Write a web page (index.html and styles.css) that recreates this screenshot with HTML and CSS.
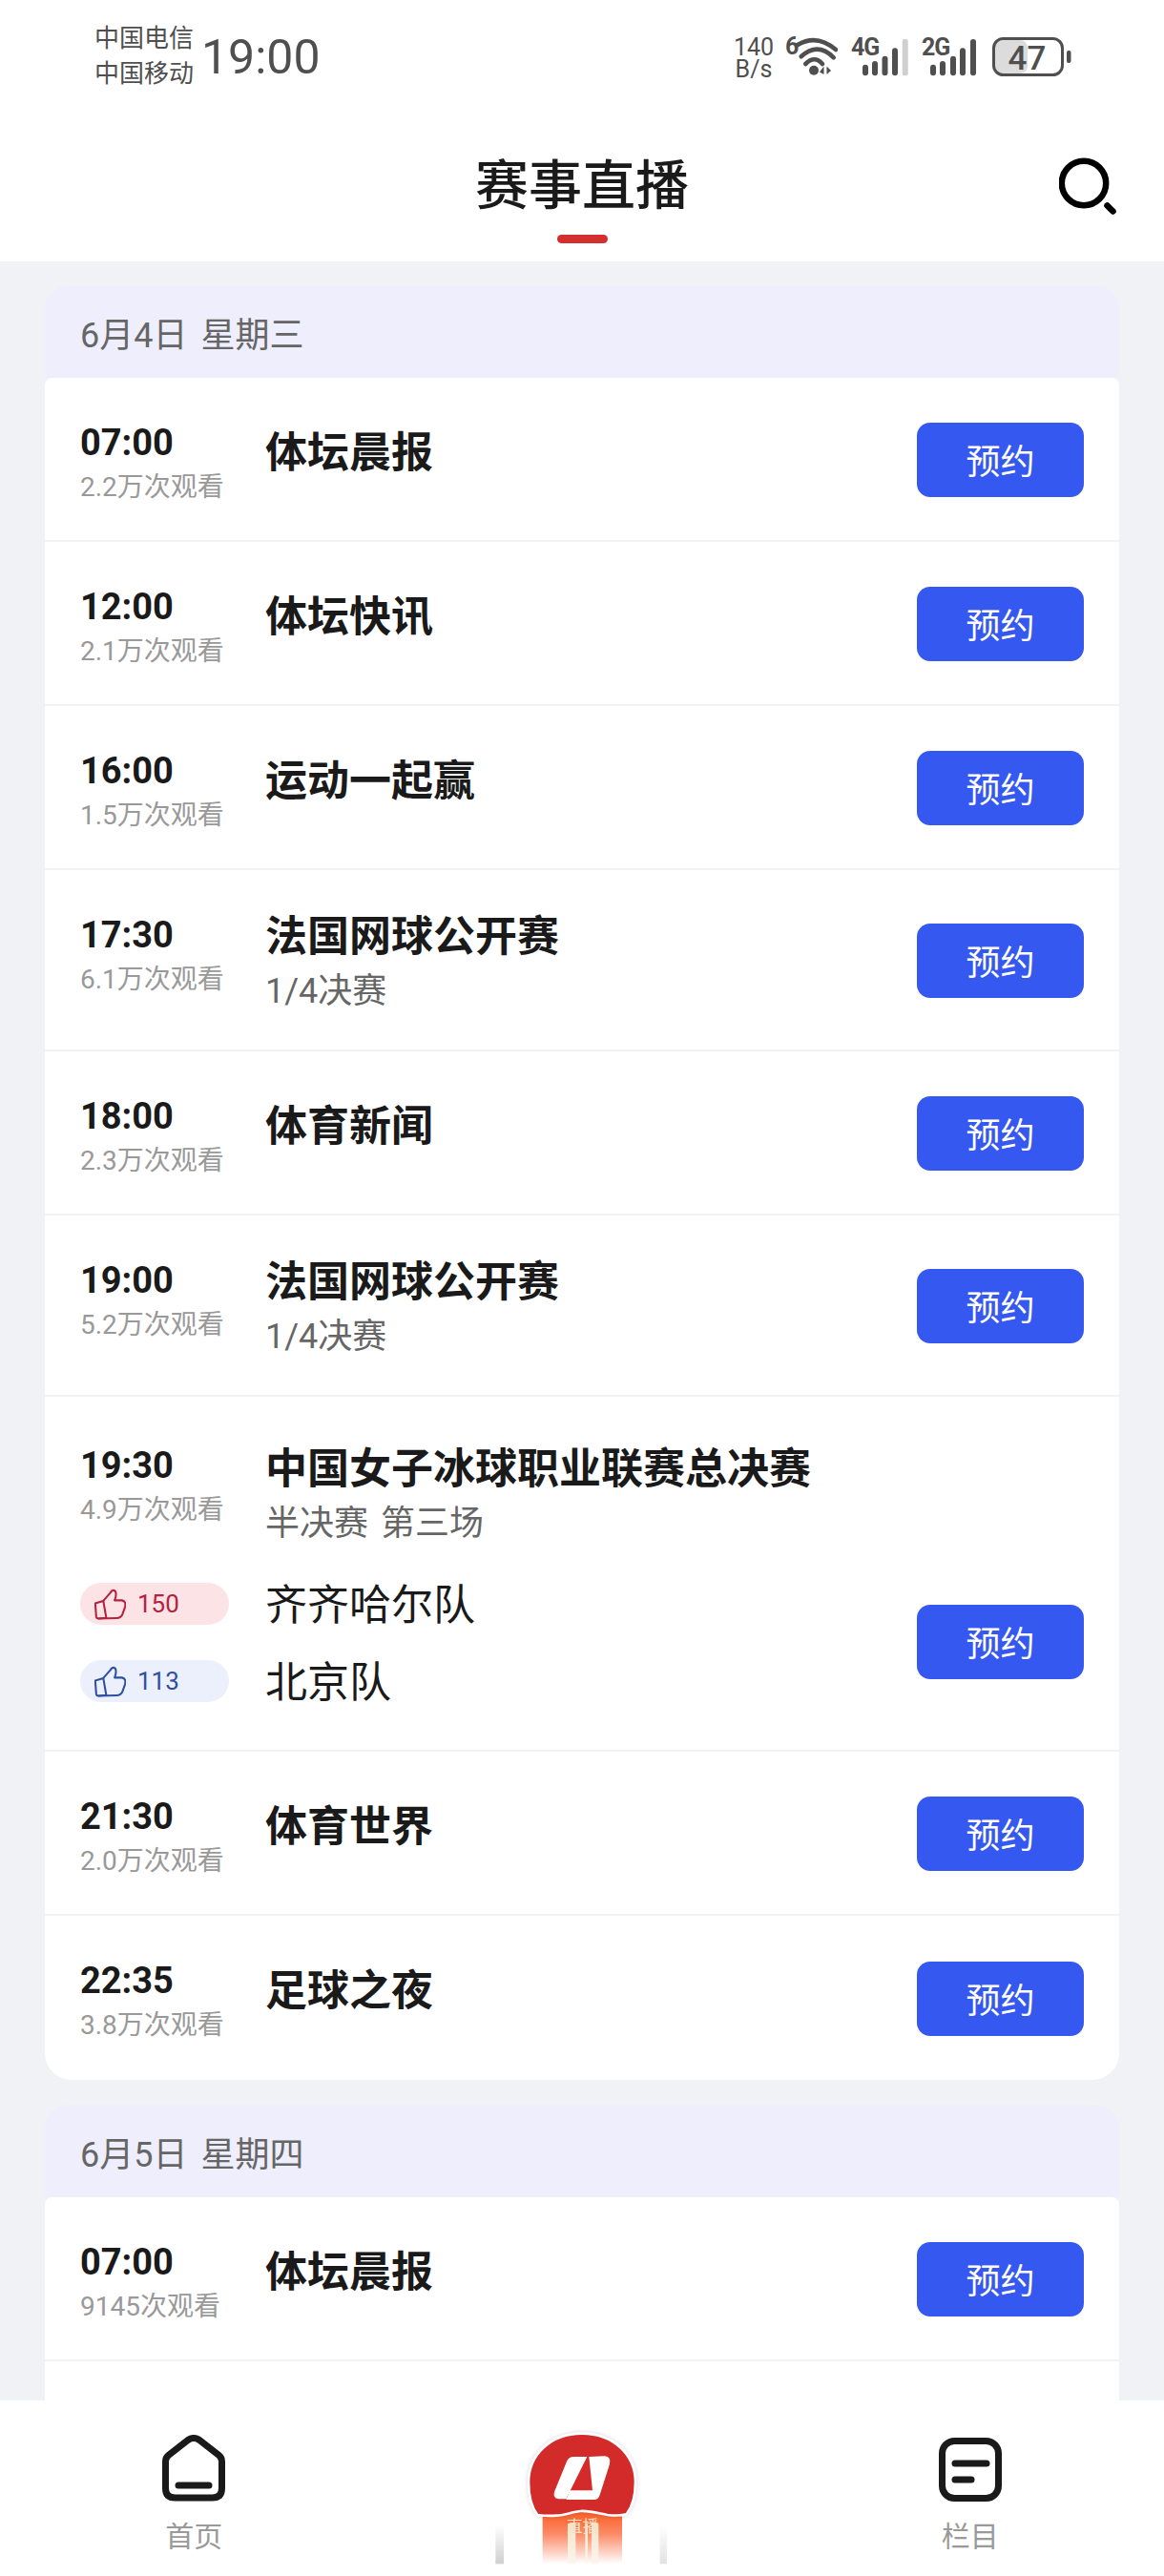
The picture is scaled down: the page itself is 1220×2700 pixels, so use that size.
FILE: index.html
```html
<!DOCTYPE html>
<html lang="zh-CN">
<head>
<meta charset="utf-8">
<title>赛事直播</title>
<link rel="stylesheet" href="styles.css">
</head>
<body>
<div class="app">
  <header class="top">
    <div class="status">
      <div class="carrier"><span>中国电信</span><span>中国移动</span></div>
      <div class="clock">19:00</div>
      <div class="status-right">
        <div class="speed"><span>140</span><span>B/s</span></div>
        <svg class="ico-wifi" width="55" height="50" viewBox="0 -6 55 50">
          <text class="st-num" x="0" y="20">6</text>
          <g class="st-line"><path d="M13 10 Q33 -2 53 15"/><path d="M16.7 22.3 Q34 6.6 50.7 23.3"/><path d="M21.3 30 Q30.7 20.6 39 30"/></g>
          <circle class="st-fill" cx="30" cy="36.7" r="5"/>
          <polygon class="st-fill" points="40.5,32.5 40.5,41 36,38.5"/>
          <polygon class="st-fill" points="43.5,32.5 43.5,41 48,37"/>
        </svg>
        <svg width="60" height="50" viewBox="0 -6 60 50">
          <text class="st-num" x="0" y="21">4G</text>
          <g class="st-fill"><rect x="12" y="30.7" width="6" height="11.6" rx="3"/><rect x="22" y="27" width="6" height="15.3" rx="3"/><rect x="32.5" y="21.7" width="6" height="20.6" rx="3"/><rect x="43" y="13.3" width="6" height="29" rx="3"/></g>
          <rect class="st-off" x="53.7" y="4" width="6" height="38.3" rx="2"/>
        </svg>
        <svg width="60" height="50" viewBox="0 -6 60 50">
          <text class="st-num" x="0" y="21">2G</text>
          <g class="st-fill"><rect x="9" y="30.7" width="6" height="11.6" rx="3"/><rect x="19" y="27" width="6" height="15.3" rx="3"/><rect x="30" y="21.7" width="6" height="20.6" rx="3"/><rect x="40" y="13.3" width="6" height="29" rx="3"/><rect x="51" y="4" width="6" height="38.3" rx="3"/></g>
        </svg>
        <svg width="83" height="44" viewBox="0 0 83 44">
          <rect class="st-off2" x="3" y="5" width="34" height="35" rx="8"/>
          <rect class="bat-frame" x="1.5" y="3.5" width="72" height="38" rx="10"/>
          <text class="bat-num" x="36.5" y="36">47</text>
          <rect class="st-fill" x="78" y="16" width="4.5" height="13" rx="2"/>
        </svg>
      </div>
    </div>
    <nav class="nav">
      <div></div>
      <div class="nav-mid">
        <h1 class="nav-title">赛事直播</h1>
        <div class="nav-mark"></div>
      </div>
      <svg class="search" width="60" height="60" viewBox="0 0 60 60">
        <circle cx="26" cy="27" r="23.2"/>
        <line x1="50.5" y1="50.5" x2="56.5" y2="56.5"/>
      </svg>
    </nav>
  </header>

  <main class="list">
    <section class="day">
      <h2 class="day-head">6月4日 星期三</h2>
      <div class="rows">
        <article class="row">
          <div class="when"><div class="time">07:00</div><div class="views">2.2万次观看</div></div>
          <div class="info"><div class="title">体坛晨报</div></div>
          <button class="book">预约</button>
        </article>
        <article class="row">
          <div class="when"><div class="time">12:00</div><div class="views">2.1万次观看</div></div>
          <div class="info"><div class="title">体坛快讯</div></div>
          <button class="book">预约</button>
        </article>
        <article class="row">
          <div class="when"><div class="time">16:00</div><div class="views">1.5万次观看</div></div>
          <div class="info"><div class="title">运动一起赢</div></div>
          <button class="book">预约</button>
        </article>
        <article class="row row-sub">
          <div class="when"><div class="time">17:30</div><div class="views">6.1万次观看</div></div>
          <div class="info"><div class="title">法国网球公开赛</div><div class="sub">1/4决赛</div></div>
          <button class="book">预约</button>
        </article>
        <article class="row">
          <div class="when"><div class="time">18:00</div><div class="views">2.3万次观看</div></div>
          <div class="info"><div class="title">体育新闻</div></div>
          <button class="book">预约</button>
        </article>
        <article class="row row-sub">
          <div class="when"><div class="time">19:00</div><div class="views">5.2万次观看</div></div>
          <div class="info"><div class="title">法国网球公开赛</div><div class="sub">1/4决赛</div></div>
          <button class="book">预约</button>
        </article>
        <article class="row row-match">
          <div class="when"><div class="time">19:30</div><div class="views">4.9万次观看</div></div>
          <div class="info"><div class="title">中国女子冰球职业联赛总决赛</div><div class="sub">半决赛 第三场</div></div>
          <div class="teams">
            <div class="team">
              <div class="pill pill-red">
                <svg class="thumb" width="33" height="33" viewBox="0 0 32 32"><path d="M0.8 15 L9 12.5 L12 29.8 L4 30.5 Q2 30.5 1.8 28.5 Z"/><path d="M9 12.5 L16 4.5 Q18.5 0.5 21 2.5 Q23 5.5 20.5 12 L28 12 Q32.5 13 31 19 L28.5 26 Q27 30 22.5 30 L4 30.5"/></svg>
                <span>150</span>
              </div>
              <div class="team-name">齐齐哈尔队</div>
            </div>
            <div class="team">
              <div class="pill pill-blue">
                <svg class="thumb" width="33" height="33" viewBox="0 0 32 32"><path d="M0.8 15 L9 12.5 L12 29.8 L4 30.5 Q2 30.5 1.8 28.5 Z"/><path d="M9 12.5 L16 4.5 Q18.5 0.5 21 2.5 Q23 5.5 20.5 12 L28 12 Q32.5 13 31 19 L28.5 26 Q27 30 22.5 30 L4 30.5"/></svg>
                <span>113</span>
              </div>
              <div class="team-name">北京队</div>
            </div>
          </div>
          <button class="book">预约</button>
        </article>
        <article class="row">
          <div class="when"><div class="time">21:30</div><div class="views">2.0万次观看</div></div>
          <div class="info"><div class="title">体育世界</div></div>
          <button class="book">预约</button>
        </article>
        <article class="row row-last">
          <div class="when"><div class="time">22:35</div><div class="views">3.8万次观看</div></div>
          <div class="info"><div class="title">足球之夜</div></div>
          <button class="book">预约</button>
        </article>
      </div>
    </section>

    <section class="day">
      <h2 class="day-head">6月5日 星期四</h2>
      <div class="rows">
        <article class="row">
          <div class="when"><div class="time">07:00</div><div class="views">9145次观看</div></div>
          <div class="info"><div class="title">体坛晨报</div></div>
          <button class="book">预约</button>
        </article>
        <div class="row-filler"></div>
      </div>
    </section>
  </main>

  <footer class="tabs">
    <a class="tab">
      <svg class="tab-ico" width="66" height="70" viewBox="0 0 66 70">
        <path d="M3.5 28 Q3.5 24 6.5 21.5 L27 5.5 Q33 1.5 39 5.5 L59.5 21.5 Q62.5 24 62.5 28 L62.5 56 Q62.5 66 52.5 66 L13.5 66 Q3.5 66 3.5 56 Z" />
        <line x1="17" y1="53" x2="49" y2="53"/>
      </svg>
      <span class="tab-label">首页</span>
    </a>
    <div class="tab tab-live">
      <svg class="live" width="200" height="172" viewBox="0 0 600 516">
        <defs>
          <linearGradient id="flame" x1="0" y1="0" x2="0" y2="1"><stop offset="0" stop-color="#fb5a1e"/><stop offset="0.45" stop-color="#fb8a66"/><stop offset="1" stop-color="#fff"/></linearGradient>
          <linearGradient id="smear" x1="0" y1="0" x2="0" y2="1"><stop offset="0" stop-color="#fff"/><stop offset="1" stop-color="#cfcfcf"/></linearGradient>
          <linearGradient id="cream" x1="0" y1="0" x2="0" y2="1"><stop offset="0" stop-color="#f6e3c8"/><stop offset="1" stop-color="#fbf6ee"/></linearGradient>
        </defs>
        <rect x="28" y="350" width="26" height="122" fill="url(#smear)"/>
        <rect x="545" y="350" width="22" height="122" fill="url(#smear)" opacity=".6"/>
        <rect x="176" y="300" width="250" height="172" fill="url(#flame)"/>
        <rect x="255" y="345" width="25" height="127" fill="url(#cream)"/>
        <rect x="310" y="345" width="8" height="127" fill="url(#cream)"/>
        <rect x="330" y="345" width="22" height="127" fill="url(#cream)"/>
        <text class="live-text" x="252" y="372">直播</text>
        <path class="live-blob" d="M300 62 C400 62 468 130 468 215 C468 260 456 295 440 316 Q420 322 380 318 C340 310 320 304 296 306 C270 308 250 318 220 320 Q190 322 160 318 C142 295 132 260 132 215 C132 130 200 62 300 62 Z"/>
        <path class="live-mark" d="M252 150 Q258 135 274 135 L316 135 L250 268 L226 268 Q208 265 213 245 Z"/>
        <path class="live-mark" d="M322 135 L372 133 Q392 135 387 158 L356 255 Q352 270 338 270 L250 270 L262 241 L333 241 Z"/>
      </svg>
    </div>
    <a class="tab">
      <svg class="tab-ico" width="66" height="70" viewBox="0 0 66 70">
        <rect x="3.5" y="6.5" width="59" height="60" rx="13"/>
        <line x1="17" y1="30" x2="50" y2="30"/>
        <line x1="17" y1="47" x2="34" y2="47"/>
      </svg>
      <span class="tab-label">栏目</span>
    </a>
  </footer>
</div>
</body>
</html>
```
FILE: styles.css
```css
* { box-sizing: border-box; }
html, body { margin: 0; padding: 0; }
body {
  width: 1220px;
  height: 2700px;
  overflow: hidden;
  background: #f1f2f5;
  font-family: Roboto, "Noto Sans CJK SC", sans-serif;
  color: #1a1a1a;
}
.app { display: flex; flex-direction: column; height: 2700px; }

/* header */
.top { background: #fff; flex: none; }
.status {
  height: 118px;
  display: flex;
  align-items: center;
  padding: 0 97px 0 99px;
  color: #4f4f4f;
}
.carrier { flex: none; display: flex; flex-direction: column; font-size: 26px; line-height: 37px; width: 106px; white-space: nowrap; }
.carrier span { height: 37px; }
.clock { flex: none; font-size: 50px; line-height: 60px; margin: 2px 0 0 6px; }
.status-right { margin-left: auto; display: flex; align-items: flex-end; gap: 14px; height: 44px; }
.speed { display: flex; flex-direction: column; align-items: center; font-size: 25px; line-height: 23px; width: 44px; margin-bottom: -3px; margin-left: 3px; margin-right: -3px; }
.st-num { font: 700 25px Roboto, sans-serif; fill: #4f4f4f; letter-spacing: -1px; }
.st-fill { fill: #4f4f4f; }
.st-off { fill: #cfcfcf; }
.st-off2 { fill: #dcdcdc; }
.st-line path { fill: none; stroke: #4f4f4f; stroke-width: 4.6; stroke-linecap: round; }
.bat-frame { fill: none; stroke: #4f4f4f; stroke-width: 3; }
.bat-num { font: 500 35px Roboto, sans-serif; fill: #4f4f4f; text-anchor: middle; }

.nav {
  height: 156px;
  display: grid;
  grid-template-columns: 1fr auto 1fr;
  padding-top: 41px;
}
.nav-mid { display: flex; flex-direction: column; align-items: center; }
.nav-title { margin: 0; height: 72px; font-size: 56px; line-height: 72px; font-weight: 500; color: #1a1a1a; }
.nav-mark { width: 53px; height: 9px; border-radius: 5px; background: #d32f2f; margin-top: 15px; }
.search { justify-self: end; margin: 6px 50px 0 0; fill: none; stroke: #000; stroke-width: 6.5; stroke-linecap: round; }

/* list */
.list { flex: 1; min-height: 0; overflow: hidden; padding: 26px 47px 0; display: flex; flex-direction: column; gap: 27px; }
.day-head {
  margin: 0;
  height: 96px;
  padding: 0 37px;
  display: flex;
  align-items: center;
  font-size: 36px;
  font-weight: 400;
  word-spacing: 5px;
  color: #666;
  background: #eeeefc;
  border-radius: 24px 24px 0 0;
}
.rows { background: #fff; border-radius: 8px 8px 28px 28px; overflow: hidden; }
.row {
  display: grid;
  grid-template-columns: 194px 1fr 175px;
  align-items: start;
  padding: 40px 37px 38px;
  border-bottom: 2px solid #f1f2f5;
  min-height: 172px;
}
.row-last { border-bottom: 0; }
.when { margin-top: 5px; }
.time { height: 46px; font-size: 38px; line-height: 46px; font-weight: 700; color: #1a1a1a; }
.views { height: 37px; font-size: 28px; line-height: 40px; margin-top: 4px; color: #999; }
.info { margin-top: 9px; }
.title { height: 60px; font-size: 44px; line-height: 60px; font-weight: 700; color: #1a1a1a; }
.sub { height: 46px; font-size: 36px; line-height: 46px; margin-top: 4px; color: #666; word-spacing: 4px; }
.book {
  align-self: center;
  width: 175px;
  height: 78px;
  border: 0;
  padding: 0 0 3px;
  border-radius: 14px;
  background: #3558f0;
  color: #fff;
  font-family: inherit;
  font-size: 36px;
}
.row-sub .info { margin-top: 0; }
.row-match { padding-top: 46px; padding-bottom: 50px; }
.row-match .when { margin-top: 3px; }
.row-match .info { margin-top: 0; }
.teams { grid-column: 1 / 3; margin-top: 39px; display: flex; flex-direction: column; gap: 37px; }
.team { display: grid; grid-template-columns: 194px 1fr; grid-template-rows: 44px; align-items: center; height: 44px; }
.pill {
  width: 156px;
  height: 44px;
  border-radius: 22px;
  display: flex;
  align-items: center;
  gap: 12px;
  padding-left: 15px;
  font-size: 26px;
}
.pill-red { background: #fbe3e6; color: #b5213f; }
.pill-blue { background: #ebf0fc; color: #2f4f9f; }
.thumb { fill: none; stroke: currentColor; stroke-width: 2; stroke-linejoin: round; }
.team-name { height: 60px; margin-top: 4px; font-size: 44px; line-height: 60px; color: #1a1a1a; }
.row-match .book { align-self: end; margin-bottom: 24px; }
.row-filler { height: 172px; }

/* tabs */
.tabs {
  flex: none;
  height: 184px;
  background: #fff;
  display: grid;
  grid-template-columns: repeat(3, 1fr);
}
.tab { display: flex; flex-direction: column; align-items: center; }
.tab-ico { margin-top: 36px; fill: none; stroke: #1a1a1a; stroke-width: 7; stroke-linecap: round; stroke-linejoin: round; }
.tab-label { height: 36px; margin-top: 19px; font-size: 30px; line-height: 36px; color: #999; }
.live { margin-top: 14px; }
.live-blob { fill: #d32a2a; stroke: #fff; stroke-width: 8; filter: drop-shadow(0 0 7px rgba(0,0,0,.16)); }
.live-mark { fill: #fff; }
.live-text { font-size: 50px; font-family: "Noto Sans CJK SC", sans-serif; fill: #f6e3c8; }
```
